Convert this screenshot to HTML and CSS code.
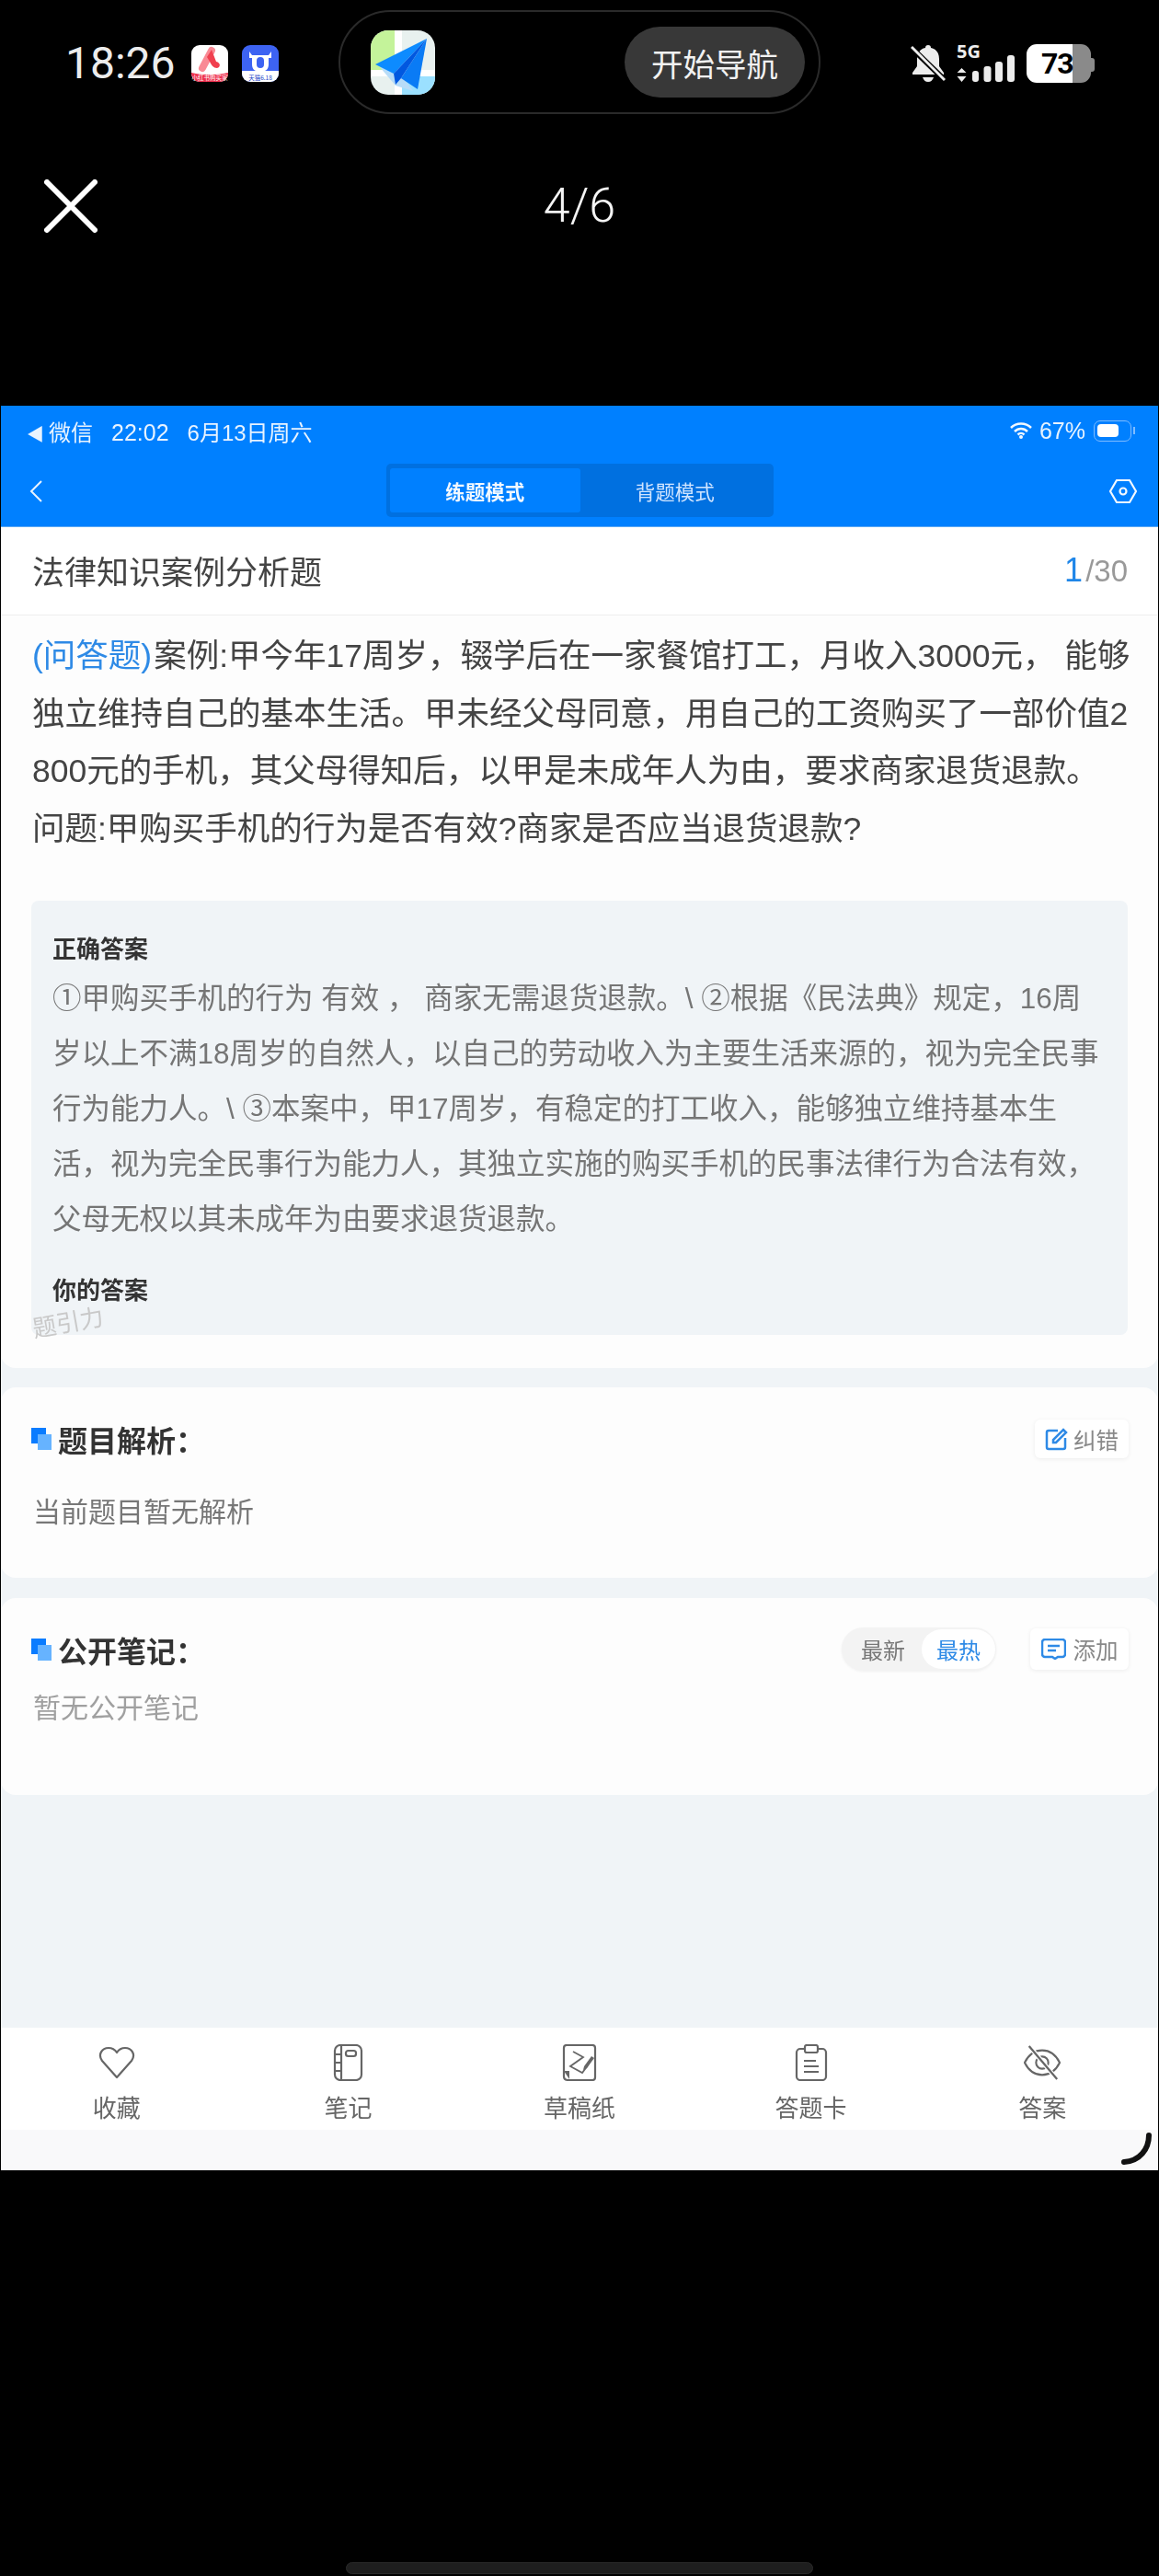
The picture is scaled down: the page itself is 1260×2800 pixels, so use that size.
FILE: index.html
```html
<!DOCTYPE html>
<html lang="zh-CN">
<head>
  <meta charset="UTF-8" />
  <title>法律知识案例分析题</title>
  <link rel="stylesheet" href="styles.css">
</head>
<body>
  <header class="phone-status">
    <div class="phone-left">
      <span class="clock">18:26</span>
      <svg class="mini-app" viewBox="0 0 40 40">
        <rect width="40" height="40" rx="9" fill="#fff"/>
        <path d="M0 30c13 3 27 3 40 0v1a9 9 0 0 1-9 9H9a9 9 0 0 1-9-9z" fill="#ee2f4d"/>
        <path d="M22 6L12 25" fill="none" stroke="#f98a95" stroke-width="8" stroke-linecap="round"/>
        <path d="M22 5l5 13c5 1 5 6 1 7-4 0-6-3-8-7l-3-5z" fill="#f0404f"/>
        <text class="mini-label" x="20" y="38" text-anchor="middle" fill="#fff">小红书购买家</text>
      </svg>
      <svg class="mini-app" viewBox="0 0 40 40">
        <rect width="40" height="40" rx="9" fill="#3d63f2"/>
        <path d="M0 28h40v3a9 9 0 0 1-9 9H9a9 9 0 0 1-9-9z" fill="#fff"/>
        <path d="M8 7l3 4h18l3-4v7h-3v7c0 6-4 8-9 8s-9-2-9-8v-7H8z" fill="#fff"/>
        <rect x="16" y="13" width="8" height="12" rx="4" fill="#3d63f2"/>
        <text class="mini-label" x="20" y="38" text-anchor="middle" fill="#2447c8">天猫6.18</text>
      </svg>
    </div>
    <div class="nav-pill">
      <svg class="map-icon" viewBox="0 0 70 70">
        <defs><clipPath id="map-clip"><rect width="70" height="70" rx="19"/></clipPath></defs>
        <g clip-path="url(#map-clip)">
          <rect width="70" height="70" fill="#e8f1ef"/>
          <rect width="26" height="43" fill="#c4f39a"/>
          <rect x="34" y="50" width="36" height="20" fill="#9be0ff"/>
          <rect x="26" width="8" height="70" fill="#fff"/>
          <rect y="43" width="70" height="7" fill="#fff"/>
          <polygon points="10,40 27,60 46,66 30,44" fill="#b7dcf8"/>
          <polygon points="61,9 5,37 25,47" fill="#0d8bff"/>
          <polygon points="61,9 51,64 33,52" fill="#0a7bf5"/>
          <polygon points="61,9 25,47 27,59 33,52" fill="#0058e0"/>
        </g>
      </svg>
      <span class="nav-btn">开始导航</span>
    </div>
    <div class="phone-right">
      <svg class="bell" viewBox="0 0 38 41">
        <path d="M19 1c2 0 3 1 3 3 6 1 9 6 9 12v8l5 7v2H2v-2l5-7v-8c0-6 3-11 9-12 0-2 1-3 3-3z" fill="#ededed"/>
        <path d="M13 36h12c-1 3-3 5-6 5s-5-2-6-5z" fill="#ededed"/>
        <path d="M0 3l37 36" stroke="#000" stroke-width="6"/>
        <path d="M1 3l36 36" stroke="#ededed" stroke-width="3"/>
      </svg>
      <svg class="signal" viewBox="0 0 63 41">
        <text class="five-g" x="0" y="15">5G</text>
        <path d="M5.500 26l5 5H.500zM5.500 41l5-6H.500z" fill="#ededed"/>
        <rect x="17" y="29" width="7" height="12" rx="3" fill="#ededed"/>
        <rect x="29.500" y="24" width="8" height="17" rx="3" fill="#ededed"/>
        <rect x="42" y="19" width="8" height="22" rx="3" fill="#ededed"/>
        <rect x="55" y="12" width="8" height="29" rx="3" fill="#ededed"/>
      </svg>
      <span class="phone-battery">73</span>
    </div>
  </header>

  <div class="viewer-bar">
    <svg class="close-x" viewBox="0 0 58 58">
      <path d="M3 3l52 52M55 3L3 55" stroke="#fff" stroke-width="6" stroke-linecap="round"/>
    </svg>
    <span class="viewer-count">4/6</span>
  </div>

  <main class="shot">
    <section class="appbar">
      <div class="ios-status">
        <span class="ios-left"><span class="ios-back">◀</span>微信<span class="ios-time">22:02</span><span>6月13日周六</span></span>
        <span class="ios-right">
          <svg class="wifi" viewBox="0 0 24 18">
            <path d="M1 6c6-6 16-6 22 0M5 10c4-4 10-4 14 0M8.500 13.500c2-2 5-2 7 0" fill="none" stroke="#f2f8ff" stroke-width="2.500"/>
            <circle cx="12" cy="16" r="2" fill="#f2f8ff"/>
          </svg>
          <span>67%</span>
          <span class="ios-battery"><span class="ios-battery-fill"></span></span>
        </span>
      </div>
      <div class="navbar">
        <svg class="back" viewBox="0 0 14 24"><path d="M13 1L2 12l11 11" fill="none" stroke="#e8f3ff" stroke-width="2"/></svg>
        <div class="mode-seg">
          <span class="mode active">练题模式</span>
          <span class="mode">背题模式</span>
        </div>
        <svg class="hex" viewBox="0 0 30 26">
          <path d="M8 1h14l7 12-7 12H8L1 13z" fill="none" stroke="#f2f8ff" stroke-width="2.200" stroke-linejoin="round"/>
          <circle cx="15" cy="13" r="3.500" fill="none" stroke="#f2f8ff" stroke-width="2.200"/>
        </svg>
      </div>
    </section>

    <div class="title-row">
      <h1>法律知识案例分析题</h1>
      <span class="progress"><b>1</b>/30</span>
    </div>

    <section class="card card-question">
      <p class="question"><span class="q-type">(问答题)</span>案例:甲今年17周岁，辍学后在一家餐馆打工，月收入3000元， 能够<br>独立维持自己的基本生活。甲未经父母同意，用自己的工资购买了一部价值2<br>800元的手机，其父母得知后，以甲是未成年人为由，要求商家退货退款。<br>问题:甲购买手机的行为是否有效?商家是否应当退货退款?</p>
      <div class="answer">
        <h3>正确答案</h3>
        <p class="answer-text">①甲购买手机的行为 有效 ， 商家无需退货退款。\ ②根据《民法典》规定，16周岁以上不满18周岁的自然人，以自己的劳动收入为主要生活来源的，视为完全民事行为能力人。\ ③本案中，甲17周岁，有稳定的打工收入，能够独立维持基本生活，视为完全民事行为能力人，其独立实施的购买手机的民事法律行为合法有效，父母无权以其未成年为由要求退货退款。</p>
        <h3 class="yours">你的答案</h3>
        <span class="watermark">题引力</span>
      </div>
    </section>

    <section class="card card-analysis">
      <div class="sec-head">
        <h2><span class="squares"></span>题目解析：</h2>
        <span class="chip">
          <svg viewBox="0 0 25 25"><path d="M14 3H4a2 2 0 0 0-2 2v16a2 2 0 0 0 2 2h16a2 2 0 0 0 2-2V11" fill="none" stroke="#2e8ae6" stroke-width="2.500"/><path d="M9 16v-3L20 2l3 3-11 11z" fill="none" stroke="#2e8ae6" stroke-width="2.500"/></svg>
          纠错
        </span>
      </div>
      <p class="sec-body">当前题目暂无解析</p>
    </section>

    <section class="card card-notes">
      <div class="sec-head">
        <h2><span class="squares"></span>公开笔记：</h2>
        <div class="sec-tools">
          <div class="sort">
            <span class="sort-item">最新</span>
            <span class="sort-item active">最热</span>
          </div>
          <span class="chip chip-add">
            <svg viewBox="0 0 27 23"><path d="M4 1h19a3 3 0 0 1 3 3v13a3 3 0 0 1-3 3h-5l-3 2-3-2H4a3 3 0 0 1-3-3V4a3 3 0 0 1 3-3z" fill="none" stroke="#2e8ae6" stroke-width="2.500"/><path d="M7 8h13M7 13h9" stroke="#2e8ae6" stroke-width="2.500"/></svg>
            添加
          </span>
        </div>
      </div>
      <p class="sec-body muted">暂无公开笔记</p>
    </section>

    <nav class="tabbar">
      <div class="tab">
        <svg viewBox="0 0 40 40"><path d="M20 36L4 18C-1 11 4 4 11 4c4 0 7 2 9 5 2-3 5-5 9-5 7 0 12 7 7 14z" fill="none" stroke="#666" stroke-width="2.200" stroke-linejoin="round"/></svg>
        <span>收藏</span>
      </div>
      <div class="tab">
        <svg viewBox="0 0 40 40"><rect x="6" y="1" width="29" height="38" rx="6" fill="none" stroke="#666" stroke-width="2.200"/><path d="M13 1v38M6 11h7M6 20h7M6 29h7" stroke="#666" stroke-width="2.200"/><rect x="18" y="7" width="11" height="6" rx="2.500" fill="none" stroke="#666" stroke-width="2.200"/></svg>
        <span>笔记</span>
      </div>
      <div class="tab">
        <svg viewBox="0 0 40 40"><path d="M8 39c-3 0-5-1-5-4V4c0-2 1-3 3-3h28c2 0 3 1 3 3v32c0 2-1 3-3 3z" fill="none" stroke="#666" stroke-width="2.200"/><path d="M3 29h6v9z" fill="#666"/><path d="M13 8l11 6-14 10 13 7 6-8" fill="none" stroke="#666" stroke-width="1.800"/><path d="M25 24l8-11 3 2-8 11-4 2z" fill="#666"/></svg>
        <span>草稿纸</span>
      </div>
      <div class="tab">
        <svg viewBox="0 0 40 40"><path d="M12 5H8a4 4 0 0 0-4 4v26a4 4 0 0 0 4 4h24a4 4 0 0 0 4-4V9a4 4 0 0 0-4-4h-4" fill="none" stroke="#666" stroke-width="2.200"/><rect x="13" y="1" width="14" height="8" rx="2" fill="none" stroke="#666" stroke-width="2.200"/><path d="M12 18h13M12 24h16M12 30h16" stroke="#666" stroke-width="2.200"/></svg>
        <span>答题卡</span>
      </div>
      <div class="tab">
        <svg viewBox="0 0 42 40"><path d="M1 20C6 10 13 6 21 6s15 4 20 14c-5 10-12 14-20 14S6 30 1 20z" fill="none" stroke="#666" stroke-width="2.200"/><circle cx="21" cy="20" r="7" fill="none" stroke="#666" stroke-width="2.200"/><path d="M6 1l32 38" stroke="#fff" stroke-width="5"/><path d="M6 1l32 38" stroke="#666" stroke-width="2.400"/></svg>
        <span>答案</span>
      </div>
    </nav>
    <div class="tab-foot"></div>

    <svg class="corner-arc" viewBox="0 0 34 35"><path d="M30 3c0 15-10 28-27 29" fill="none" stroke="#111" stroke-width="6" stroke-linecap="round"/></svg>
  </main>

  <div class="home-bar"></div>
</body>
</html>
```

FILE: styles.css
```css
*{margin:0;padding:0;box-sizing:border-box}
body{width:1260px;height:2800px;background:#000;font-family:"Liberation Sans","Noto Sans CJK SC",sans-serif;display:flex;flex-direction:column;overflow:hidden}

/* phone chrome */
.phone-status{height:135px;display:grid;grid-template-columns:368px 524px 1fr;align-items:center}
.phone-left{display:flex;align-items:center;padding-left:71px;padding-top:2px}
.clock{font-family:Roboto,sans-serif;font-size:48px;color:#ececec;width:137px}
.mini-app{width:40px;height:40px;margin-right:15px}
.mini-label{font-size:6.500px;font-family:"Noto Sans CJK SC",sans-serif}
.nav-pill{height:113px;border:2px solid #2a2a2a;border-radius:57px;display:flex;align-items:center;justify-content:space-between;padding:0 15px 0 33px}
.map-icon{width:70px;height:70px}
.nav-btn{width:196px;height:77px;background:#383838;border-radius:39px;color:#f2f2f2;font-size:34.500px;display:flex;align-items:center;justify-content:center}
.phone-right{display:flex;align-items:center;padding-left:98px;padding-top:2px}
.bell{width:38px;height:41px;margin-right:12px}
.signal{width:63px;height:41px;margin-right:13px}
.five-g{font:700 20px "Open Sans",sans-serif;fill:#ededed}
.phone-battery{position:relative;width:70px;height:42px;border-radius:11px;background:linear-gradient(90deg,#fff 50px,#8a8a8a 50px);color:#000;font:700 32px/42px Roboto,sans-serif;letter-spacing:-1px;padding-left:16px}
.phone-battery::after{content:"";position:absolute;right:-4px;top:15px;width:4px;height:15px;background:#8a8a8a;border-radius:0 3px 3px 0}
.viewer-bar{height:306px;position:relative;padding:60px 0 0 48px}
.close-x{display:block;width:58px;height:58px}
.viewer-count{position:absolute;left:0;right:0;top:54px;text-align:center;font:300 52px/70px Roboto,sans-serif;color:#f5f5f5}
.home-bar{width:508px;height:13px;margin:auto 0 2px 376px;background:#1e1e1e;border:1px solid #2a2a2a;border-radius:7px}

/* screenshot of the app */
.shot{position:relative;width:1258px;height:1918px;margin-left:1px;background:#f0f4f7;display:flex;flex-direction:column;color:#444;filter:blur(.5px)}
.appbar{background:#0080ff;height:132px;border-bottom:1px solid #5aa9f5;color:#e8f3ff}
.ios-status{height:54px;display:flex;align-items:center;justify-content:space-between;padding:0 29px 0 28px;font-size:24px}
.ios-back{font-size:19px;margin-right:5px}
.ios-time{margin:0 20px 0 20px;font-size:25px}
.ios-right{display:flex;align-items:center;font-size:25px}
.wifi{width:24px;height:18px;margin-right:8px}
.ios-battery{position:relative;width:41px;height:23px;margin-left:9px;border:1.500px solid #7fbcff;border-radius:7px;padding:3px}
.ios-battery::after{content:"";position:absolute;right:-5px;top:6px;width:2px;height:8px;background:#7fbcff}
.ios-battery-fill{display:block;width:23px;height:14px;background:#fff;border-radius:4px}
.navbar{height:77px;position:relative;display:flex;align-items:center;justify-content:space-between;padding:0 23px 0 31px}
.back{width:14px;height:24px}
.hex{width:30px;height:26px}
.mode-seg{position:absolute;left:419px;top:9px;width:421px;height:58px;background:#0070e0;border-radius:5px;display:grid;grid-template-columns:1fr 1fr;padding:5px 4px;font-size:21.500px}
.mode{display:flex;align-items:center;justify-content:center;color:#cfe4ff}
.mode.active{background:#0080ff;color:#f2f8ff;font-weight:700;border-radius:3px}

.title-row{height:96px;padding:0 33px 2px 34px;background:#fff;border-bottom:1px solid #eee;display:flex;align-items:center;justify-content:space-between}
.title-row h1{font-size:35px;font-weight:400;color:#444}
.progress{font-size:33px;color:#999}
.progress b{font-size:36px;font-weight:400;color:#1f86e8;margin-right:3px}

.card{background:#fdfdfd;padding:0 33px;border-radius:16px}
.card-question{padding-bottom:36px;border-radius:0 0 16px 16px}
.question{margin:13px -1px 47px 1px;font-size:35.500px;line-height:62.500px;white-space:nowrap}
.q-type{color:#2e8ae6;margin-right:2px}
.answer{position:relative;background:#f0f4f7;border-radius:8px;padding:35px 25px 30px 23px;height:472px}
.answer h3{font-size:26px;line-height:36px;font-weight:700;color:#333}
.answer-text{margin-top:5px;font-size:31.500px;line-height:60px;color:#757575;word-break:break-all}
.answer .yours{margin-top:30px}
.watermark{position:absolute;left:1px;bottom:-2px;font-size:26px;line-height:30px;color:#c9c9c9;transform:rotate(-10deg)}

.card-analysis{margin-top:21px;height:207px;padding-top:33px}
.card-notes{margin-top:22px;height:214px;padding-top:32px}
.sec-head{display:flex;align-items:center;justify-content:space-between;min-height:42px;margin-right:-1px}
.sec-head h2{display:flex;align-items:center;font-size:32px;font-weight:700;color:#333}
.squares{position:relative;width:22px;height:24px;margin-right:7px;background:linear-gradient(#66b3ff,#66b3ff) 7px 7px/15px 17px no-repeat,linear-gradient(#0a7cff,#0a7cff) 0 0/16px 17px no-repeat}
.sec-tools{display:flex;align-items:center;gap:37px}
.chip{display:flex;align-items:center;justify-content:center;width:102px;height:42px;background:#fff;border-radius:6px;box-shadow:0 1px 5px rgba(0,0,0,.07);font-size:24.500px;color:#888;gap:6px}
.chip svg{width:25px;height:25px}
.chip-add{width:107px;height:45px;gap:8px}
.chip-add svg{width:27px;height:23px}
.sort{display:flex;align-items:center;width:168px;height:47px;background:#f3f3f3;border-radius:24px;padding:2px 1px 2px 21px;font-size:24px;color:#777;justify-content:space-between;box-shadow:0 1px 3px rgba(0,0,0,.05)}
.sort-item.active{width:80px;height:43px;background:#fff;border-radius:22px;color:#2e8ae6;display:flex;align-items:center;justify-content:center}
.sec-body{margin-top:37px;font-size:30px;line-height:40px;color:#777;padding-left:2px}
.sec-body.muted{margin-top:21px;color:#a0a0a0}

.tabbar{margin-top:auto;height:111px;background:#fff;display:grid;grid-template-columns:repeat(5,1fr);padding-top:18px}
.tab{display:flex;flex-direction:column;align-items:center;font-size:26px;line-height:32px;color:#666}
.tab svg{width:40px;height:40px;margin-bottom:14px}
.tab-foot{height:44px;background:#f9f9fa}
.corner-arc{position:absolute;right:6px;bottom:6px;width:34px;height:35px}
```
